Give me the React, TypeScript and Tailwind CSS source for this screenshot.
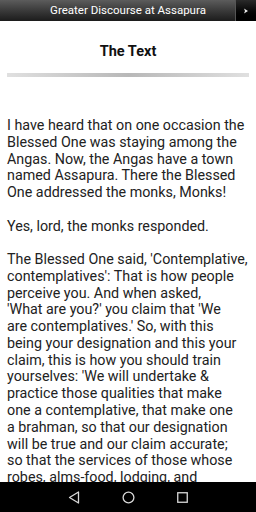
import React from "react";

// line breaks follow the device rendering
const paragraphs = [
  [
    "I have heard that on one occasion the",
    "Blessed One was staying among the",
    "Angas. Now, the Angas have a town",
    "named Assapura. There the Blessed",
    "One addressed the monks, Monks!",
  ],
  ["Yes, lord, the monks responded."],
  [
    "The Blessed One said, 'Contemplative,",
    "contemplatives': That is how people",
    "perceive you. And when asked,",
    "'What are you?' you claim that 'We",
    "are contemplatives.' So, with this",
    "being your designation and this your",
    "claim, this is how you should train",
    "yourselves: 'We will undertake &",
    "practice those qualities that make",
    "one a contemplative, that make one",
    "a brahman, so that our designation",
    "will be true and our claim accurate;",
    "so that the services of those whose",
    "robes, alms-food, lodging, and",
    "medicinal requisites we use will bring",
  ],
];

export default function App() {
  return (
    <div
      className="flex flex-col h-[512px] w-[256px] overflow-hidden bg-white"
      style={{ fontFamily: "Roboto, 'Liberation Sans', sans-serif" }}
    >
      {/* Top bar */}
      <div className="relative h-[21px] shrink-0 flex items-center justify-center bg-gradient-to-b from-[#5c5c5c] to-[#1c1c1c]">
        <span className="text-white text-[11.5px] leading-none">Greater Discourse at Assapura</span>
        <div className="absolute right-0 top-0 h-[21px] w-[21px] flex items-center justify-center bg-gradient-to-b from-[#2a2a2a] to-black border-l border-[#555]">
          <svg width="6" height="6" viewBox="0 0 6 6">
            <path d="M1 0.5 L5 3 L1 5.5 L2 3 Z" fill="#eee" />
          </svg>
        </div>
      </div>

      {/* Section title */}
      <h1 className="shrink-0 mt-[21px] text-center text-[14.5px] font-bold text-[#111] leading-[20px]">
        The Text
      </h1>

      <div className="shrink-0 mx-[7px] mt-[11px] h-[4px] bg-gradient-to-r from-[#e0e0e0] via-[#b8b8b8] to-[#e0e0e0]" />

      {/* Body */}
      <div className="flex-1 overflow-hidden px-[7px] pt-[40px] text-[14.3px] leading-[16.76px] text-[#222]">
        {paragraphs.map((lines, i) => (
          <p key={i} className="mb-[16.76px] whitespace-nowrap">
            {lines.map((l, j) => (
              <React.Fragment key={j}>
                {l}
                {j < lines.length - 1 && <br />}
              </React.Fragment>
            ))}
          </p>
        ))}
      </div>

      {/* Nav bar */}
      <div className="shrink-0 h-[30px] bg-black flex items-center justify-center gap-[42px]">
        <svg width="12" height="13" viewBox="0 0 12 13">
          <path d="M10.5 1 L1.5 6.5 L10.5 12 Z" fill="none" stroke="#d8d8d8" strokeWidth="1.3" strokeLinejoin="round" />
        </svg>
        <svg width="13" height="13" viewBox="0 0 13 13">
          <circle cx="6.5" cy="6.5" r="5.4" fill="none" stroke="#d8d8d8" strokeWidth="1.3" />
        </svg>
        <svg width="11" height="11" viewBox="0 0 11 11">
          <rect x="0.75" y="0.75" width="9.5" height="9.5" fill="none" stroke="#d8d8d8" strokeWidth="1.3" />
        </svg>
      </div>
    </div>
  );
}
